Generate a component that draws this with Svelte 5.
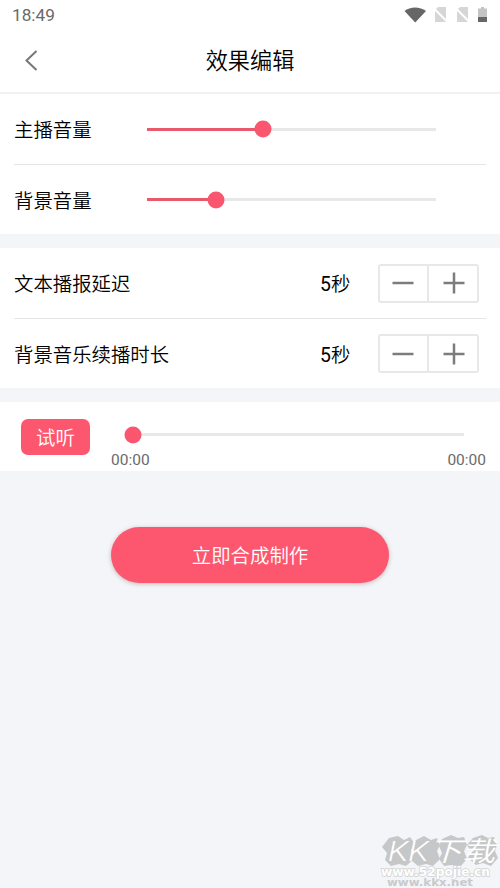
<script lang="ts">
	let volumes = $state([
		{ label: '主播音量', value: 40 },
		{ label: '背景音量', value: 24 }
	]);

	let durations = $state([
		{ label: '文本播报延迟', seconds: 5 },
		{ label: '背景音乐续播时长', seconds: 5 }
	]);

	let progress = $state(0);

	function change(item: { seconds: number }, step: number) {
		item.seconds = Math.max(0, item.seconds + step);
	}
</script>

{#snippet slider(value: number)}
	<div class="track">
		<div class="fill" style="width: {value}%"></div>
		<div class="thumb" style="left: {value}%"></div>
	</div>
{/snippet}

<div class="screen">
	<div class="status-bar">
		<span>18:49</span>
		<svg width="84" height="18" viewBox="0 0 84 18">
			<path d="M0.5 4C6 -0.8 16 -0.8 22 4L11.200 15.500Z" fill="#666" />
			<path d="M34 0h8v15H31V3z" fill="#d6d6d6" />
			<path d="M56 0h8v15H53V3z" fill="#d6d6d6" />
			<path d="M29.500 1l14 14M51.500 1l14 14" stroke="#fff" stroke-width="2" />
			<path d="M74 1.500h3V0h3v1.500h3V10h-9z" fill="#c4c4c4" />
			<path d="M74 10h9v5h-9z" fill="#666" />
		</svg>
	</div>

	<header>
		<button class="back" aria-label="返回">
			<svg width="14" height="22" viewBox="0 0 14 22">
				<path d="M12.500 1L2.500 10.500L12.500 20" fill="none" stroke="#777" stroke-width="2" />
			</svg>
		</button>
		<h1>效果编辑</h1>
	</header>

	<section class="card">
		{#each volumes as item (item.label)}
			<div class="row">
				<span class="label">{item.label}</span>
				{@render slider(item.value)}
			</div>
		{/each}
	</section>

	<section class="card">
		{#each durations as item (item.label)}
			<div class="row">
				<span class="label wide">{item.label}</span>
				<span class="seconds"><b>{item.seconds}</b>秒</span>
				<div class="stepper">
					<button aria-label="减少" onclick={() => change(item, -1)}>
						<svg width="22" height="22" viewBox="0 0 22 22"><path d="M0.500 11h21" /></svg>
					</button>
					<button aria-label="增加" onclick={() => change(item, 1)}>
						<svg width="22" height="22" viewBox="0 0 22 22"><path d="M0.500 11h21M11 0.500v21" /></svg>
					</button>
				</div>
			</div>
		{/each}
	</section>

	<section class="card preview">
		<button class="listen">试听</button>
		<div class="player">
			{@render slider(progress)}
			<div class="times">
				<span>00:00</span>
				<span>00:00</span>
			</div>
		</div>
	</section>

	<button class="submit">立即合成制作</button>

	<div class="watermark">
		<svg width="124" height="58" viewBox="0 0 124 58">
			<g fill="#c6c7c8">
				<path d="M13 8l9-2 6 4 6-3 5 7-4 6 4 8-9 8-7-2-8 2-6-6 2-7-5-6z" />
				<path d="M40 10l8-4 7 4 6-2 3 7-3 6 3 8-7 7-7-2-8 2-7-6 3-7-3-6z" />
				<path d="M66 9l9-4 7 3 6-1 3 8-3 6 3 8-7 8-8-2-8 1-5-7 3-6-3-7z" />
				<path d="M97 8l9-3 6 3 6-1 3 8-2 6 3 7-7 8-8-3-7 2-8-7 3-6-4-7z" />
			</g>
			<text x="12" y="31" class="mark" textLength="107" lengthAdjust="spacingAndGlyphs">KK下载</text>
			<text x="11" y="56" class="site" textLength="86" lengthAdjust="spacingAndGlyphs">www.kkx.net</text>
			<text x="5" y="46" class="source" textLength="109" lengthAdjust="spacingAndGlyphs">www.52pojie.cn</text>
		</svg>
	</div>
</div>

<style>
	:global(body) {
		background: #f3f5f8;
	}

	.screen {
		position: relative;
		height: 888px;
		display: flex;
		flex-direction: column;
		overflow: hidden;
		background: #f3f5f8;
		color: #000;
		font-family: Roboto, 'Noto Sans CJK SC', sans-serif;
		font-size: 19.4px;
		font-weight: 350;
	}

	button {
		padding: 0;
		border: none;
		background: none;
		font: inherit;
		cursor: pointer;
	}

	svg {
		display: block;
	}

	.status-bar {
		height: 30px;
		box-sizing: border-box;
		padding: 7px 12px 0 12px;
		display: flex;
		justify-content: space-between;
		background: white;
		color: #6a6a6a;
		font-size: 17.2px;
		font-weight: 400;
		line-height: 17px;
	}

	header {
		height: 64px;
		box-sizing: border-box;
		display: grid;
		grid-template-columns: 50px 1fr 50px;
		align-items: center;
		background: white;
		border-bottom: 2px solid #f1f1f2;
	}

	.back {
		margin-left: 24px;
		justify-self: start;
	}

	h1 {
		margin: 0;
		font-size: 22.200px;
		font-weight: 350;
		line-height: 30px;
		text-align: center;
	}

	.card {
		height: 140px;
		flex: none;
		box-sizing: border-box;
		padding: 0 14px;
		margin-bottom: 14px;
		background: white;
	}

	.row {
		height: 70px;
		display: flex;
		align-items: center;
	}

	.row + .row {
		height: 69px;
		padding-top: 1px;
		border-top: 1px solid #e5e5e6;
		box-sizing: border-box;
	}

	.label,
	.seconds {
		padding-bottom: 2px;
	}

	.row + .row .label,
	.row + .row .seconds {
		padding-bottom: 0;
	}

	.label {
		width: 133px;
	}

	.label.wide {
		width: 306px;
	}

	.seconds {
		width: 58px;
	}

	.seconds b {
		font-weight: 400;
	}

	.track {
		position: relative;
		width: 289px;
		height: 3px;
		background: #e8e8e8;
	}

	.fill {
		height: 100%;
		background: #e7596b;
	}

	.thumb {
		position: absolute;
		top: 50%;
		width: 17px;
		height: 17px;
		border-radius: 50%;
		background: #fb566f;
		transform: translate(-50%, -50%);
	}

	.stepper {
		width: 101px;
		height: 39px;
		box-sizing: border-box;
		display: grid;
		grid-template-columns: 47px 50px;
		border: 2px solid #e8e8ea;
		border-radius: 3px;
	}

	.stepper button {
		padding-right: 1px;
		display: flex;
		align-items: center;
		justify-content: center;
	}

	.stepper button + button {
		padding: 0 0 0 1px;
		border-left: 2px solid #e8e8ea;
	}

	.stepper path {
		stroke: #7c7c7c;
		stroke-width: 2.500;
	}

	.preview {
		height: 69px;
		padding: 0 14px 0 21px;
		display: flex;
		align-items: center;
	}

	.listen {
		width: 69px;
		height: 36px;
		border-radius: 7px;
		background: #fd576f;
		color: white;
	}

	.player {
		flex: 1;
		height: 100%;
		box-sizing: border-box;
		padding: 31px 0 0 21px;
	}

	.player .track {
		width: 331px;
		margin-left: 22px;
	}

	.times {
		margin-top: 14px;
		display: flex;
		justify-content: space-between;
		color: #6a6a6a;
		font-size: 15.500px;
		font-weight: 400;
		line-height: 20px;
	}

	.submit {
		width: 278px;
		height: 56px;
		flex: none;
		padding-bottom: 2px;
		margin: 42px auto 0 111px;
		border-radius: 28px;
		background: #fd576f;
		color: white;
		box-shadow: 0 1px 4px rgba(120, 60, 70, 0.35);
	}

	.watermark {
		position: absolute;
		right: 0;
		bottom: 0;
	}

	.mark {
		fill: #fff;
		font-size: 27px;
		font-weight: 350;
		font-style: italic;
	}

	.source {
		fill: #fff;
		stroke: #d2d3d5;
		stroke-width: 1.500;
		paint-order: stroke;
		font: bold 12.500px 'DejaVu Sans', sans-serif;
	}

	.site {
		fill: #c9cacc;
		font: bold 10.500px 'DejaVu Sans', sans-serif;
	}
</style>
